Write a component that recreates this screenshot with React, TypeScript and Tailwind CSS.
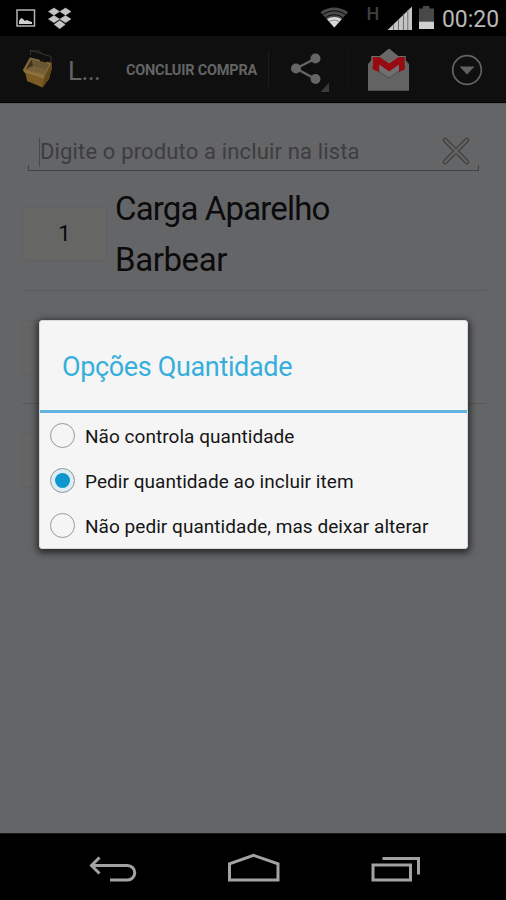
import React, { useState } from "react";

const options = [
    "Não controla quantidade",
    "Pedir quantidade ao incluir item",
    "Não pedir quantidade, mas deixar alterar",
];

function StatusBar() {
    return (
        <div className="flex h-9 shrink-0 items-center bg-black">
            <svg width="506" height="36" viewBox="0 0 506 36" fill="none">
                {/* Picture notification */}
                <rect x="17" y="10" width="17.5" height="16" stroke="#b4b4b4" strokeWidth="1.5" />
                <path d="M19 24v-3l2-3 2 1 2 2 2-1 2 1 3 1v2z" fill="#cfcfcf" />
                {/* Dropbox */}
                <path
                    d="M54 8l5.5 3.6-5.5 3.6-5.6-3.6zM65.500 8l5.500 3.600-5.500 3.600-5.600-3.600zM54 15.600l5.500 3.500-5.500 3.600-5.600-3.600zM65.500 15.600l5.500 3.500-5.500 3.600-5.600-3.600zM59.700 20.500l5.500 4-5.500 4.200-5.500-4.200z"
                    fill="#c4c4c4" stroke="#c4c4c4" strokeWidth=".5"
                />
                {/* Wifi */}
                <path d="M320.500 12.200c8-6.200 19-6.200 27.500 0l-13.700 15.300z" fill="#4a4a4a" />
                <path d="M323 14.500c7-4.800 15.500-4.800 22.500 0M325.500 17.500c5.500-3.600 12-3.600 17.500 0" stroke="#080808" strokeWidth="1" />
                <path d="M327 19.300c4.500-3 10-3 14.600 0l-7.300 8.200z" fill="#d8d8d8" />
                <path d="M329 21.500c3.500-1.800 7-1.800 10.500 0" stroke="#777" strokeWidth=".8" />
                {/* Signal */}
                <path d="M387.500 30L412 6.500V30z" fill="#c4c4c4" />
                <path d="M393.500 24v6M398.500 19v11M403.500 14v16M407.800 10v20" stroke="#6e6e6e" strokeWidth="1" />
                {/* Battery */}
                <path d="M423 6h6.500v2.500H434V22h-15V8.500h4z" fill="#484848" />
                <path d="M419 21.700h15V29h-15z" fill="#cfcfcf" />
                <text x="366.500" y="19.500" fill="#404040" fontFamily="Roboto" fontSize="18" fontWeight="500">H</text>
                <text x="442" y="27" fill="#b8b8b8" fontFamily="Roboto" fontSize="24" textLength="57" lengthAdjust="spacingAndGlyphs">00:20</text>
            </svg>
        </div>
    );
}

function BasketIcon() {
    return (
        <svg className="ml-5 shrink-0" width="36" height="44" viewBox="0 0 36 44" fill="none">
            <path d="M10 10.500L31.500 16l.5 5-3 11-6.500 8.500L7 34 5.500 27 3 23z" fill="#7a5c25" />
            <path d="M10 10.500L31.500 16 24.500 29.500 3 23z" fill="#80683a" />
            <path d="M11.500 12.500L29.500 17 23.500 26.500 6 22z" fill="#695634" />
            <path d="M11.500 12.500L13 19l-7 3z" fill="#3f321b" />
            <path d="M13 19l13.500 3.500-3 4L6 22z" fill="#766036" />
            <path d="M3 22.500l21.500 6.500v2.500L4 25z" fill="#91743a" />
            <path d="M24.500 29.500l-2 11L29 31.500 32 20l-.500-4z" fill="#60481c" />
            <path d="M20 13.500l6.500 1.500" stroke="#1c160c" strokeWidth="1.600" />
            <path d="M10.500 8V3.500l20.500 6V16M10.500 3.500l9 .500 3 3" stroke="#39342a" strokeWidth="1" />
        </svg>
    );
}

function ShareIcon() {
    return (
        <svg className="shrink-0" width="44" height="46" viewBox="0 0 44 46" fill="none">
            <path d="M30.500 12.500L11 22.500l19.500 10.500" stroke="#666" strokeWidth="2.300" />
            <circle cx="30.500" cy="12.500" r="5" fill="#666" />
            <circle cx="11" cy="22.500" r="5" fill="#666" />
            <circle cx="30.500" cy="33" r="5" fill="#666" />
            <path d="M35.500 46l10-11v11z" fill="#3a3a3a" />
        </svg>
    );
}

function GmailIcon() {
    return (
        <svg className="shrink-0" width="43" height="43" viewBox="0 0 43 43" fill="none">
            <path d="M1 16L4.500 12v-4H13L22 .800 31 8h7.500v4l3.500 4v26.500H1z" fill="#606060" />
            <path d="M13 8L22 .800 31 8l-9 6z" fill="#686868" />
            <path d="M4.500 8h34v14L22 30 4.500 22z" fill="#707070" />
            <path d="M1 16l21 13.500L42 16v26.500H1z" fill="#636363" />
            <path d="M4.500 19L22 30l16.500-11" stroke="#505050" strokeWidth="1" />
            <path d="M13 8L22 .800 31 8l-9 6z" fill="#686868" />
            <path d="M5.700 9h7l9.500 6.500L31.500 9h6.300v12.500L32 24v-7.500l-9.800 7-10-7V24l-6.500-2.500z" fill="#960a12" />
        </svg>
    );
}

function ActionBar() {
    return (
        <div className="flex h-[67px] shrink-0 items-center border-b border-[#050505] bg-[#0f0f0f] text-[#646464]">
            <BasketIcon />
            <span className="mt-1 ml-[12px] w-[32px] text-[26px] leading-none tracking-[-0.6px]">L...</span>
            <span className="mt-1 ml-[26px] w-[131px] whitespace-nowrap text-[14.500px] font-bold tracking-[-0.2px]">CONCLUIR COMPRA</span>
            <div className="ml-[11px] h-9 w-px bg-[#1c1c1c]" />
            <div className="ml-[16px] w-[63px]">
                <ShareIcon />
            </div>
            <div className="h-9 w-px bg-[#161616]" />
            <div className="ml-[18px] w-[43px]">
                <GmailIcon />
            </div>
            <svg className="mt-px ml-[41px] shrink-0" width="32" height="32" viewBox="0 0 32 32" fill="none">
                <circle cx="16" cy="16" r="14.300" stroke="#626262" strokeWidth="1.700" />
                <path d="M8.500 12.500h15L16 20.500z" fill="#626262" />
            </svg>
        </div>
    );
}

function NavBar() {
    return (
        <div className="flex h-[67px] shrink-0 items-center border-t border-[#1c1c1c] bg-black">
            <svg width="506" height="66" viewBox="0 0 506 66" fill="none" stroke="#a2a2a2" strokeWidth="3">
                <path d="M91.500 31.500H127.500a7 7 0 0 1 0 14.500h-17.500M99.500 23.500l-8 8 8 8" />
                <path d="M229.500 46V29.800L253.500 21.300l24.500 8.500V46z" />
                <path d="M373 31h37.500v15H373zM382.500 24.500H418.500V40.500" />
            </svg>
        </div>
    );
}

export default function App() {
    const [product, setProduct] = useState("");
    const [selected, setSelected] = useState(1);

    return (
        <div className="relative flex h-[900px] w-[506px] flex-col overflow-hidden bg-[#646567] font-[Roboto,sans-serif]">
            <StatusBar />
            <ActionBar />

            <div className="flex-1 border-t border-[#5a5a5c] px-[22px] pt-[31px]">
                {/* Product search */}
                <div className="mx-[6px] flex h-[36px] w-[451px] items-center border-b border-[#434345]">
                    <div className="h-[5px] w-px self-end bg-[#434345]" />
                    <div className="ml-[10px] h-[29px] w-px bg-[#48494b]" />
                    <input value={product} onChange={(e) => setProduct(e.target.value)}
                        placeholder="Digite o produto a incluir na lista"
                        className="mb-[3px] w-[380px] bg-transparent text-[22px] tracking-[0.15px] text-[#202020] outline-none placeholder:text-[#3c3d3f]" />
                    <svg className="mb-[3px] ml-[21px] shrink-0" width="30" height="30" viewBox="0 0 30 30" fill="none">
                        <path d="M4 4l22 22M26 4L4 26" stroke="#3d3b39" strokeWidth="4.600" strokeLinecap="round" />
                        <path d="M4 4l22 22M26 4L4 26" stroke="#63625f" strokeWidth="2.600" strokeLinecap="round" />
                    </svg>
                    <div className="ml-auto h-[5px] w-px self-end bg-[#434345]" />
                </div>

                {/* Cart item */}
                <div className="mt-[12px] flex h-[108px] w-[464px] items-center border-b border-[#5a5b5d] pb-[6px]">
                    <div className="flex h-[55px] w-[85px] items-center justify-center rounded-sm border border-[#5f6061] bg-[#666665] text-[22px] text-[#080808]">1</div>
                    <div className="ml-[8px] w-[240px] text-[33px] leading-[51px] tracking-[-0.85px] text-[#0b0b0c]">
                        Carga Aparelho <span className="tracking-[-0.4px]">Barbear</span>
                    </div>
                </div>
                <div className="mt-[29px] h-[55px] w-[85px] rounded-sm border border-[#606162] bg-[#656565]" />
                <div className="mt-[28px] h-px w-[464px] bg-[#59595b]" />
                <div className="mt-[29px] h-[55px] w-[85px] rounded-sm border border-[#606162] bg-[#656565]" />
            </div>

            <NavBar />

            {/* Quantity dialog */}
            <div className="absolute top-[320px] left-[39px] h-[229px] w-[429px] rounded-[3px] border border-[#d8d8d8] bg-[#f5f5f5] shadow-[0_2px_7px_2px_rgba(0,0,0,0.6)]">
                <h2 className="flex h-[92px] items-center border-b-3 border-[#62b4e0] pt-[3px] pl-[22px] text-[27px] tracking-[-0.35px] text-[#37afdd]">Opções Quantidade</h2>
                <div className="flex flex-col">
                    {options.map((option, i) => (
                        <button key={option} onClick={() => setSelected(i)} className="flex h-[45px] items-center pl-[10px] text-left">
                            <span className={`flex size-[25px] items-center justify-center rounded-full border-[1.500px] ${selected === i ? "border-[#8c979c] bg-[#dfedf3]" : "border-[#999]"}`}>
                                {selected === i && <span className="size-[15px] rounded-full bg-[#0c97cf]" />}
                            </span>
                            <span className="mt-[3px] ml-[10px] whitespace-nowrap text-[19px] tracking-[0.04px] text-[#161616]">{option}</span>
                        </button>
                    ))}
                </div>
            </div>
        </div>
    );
}
